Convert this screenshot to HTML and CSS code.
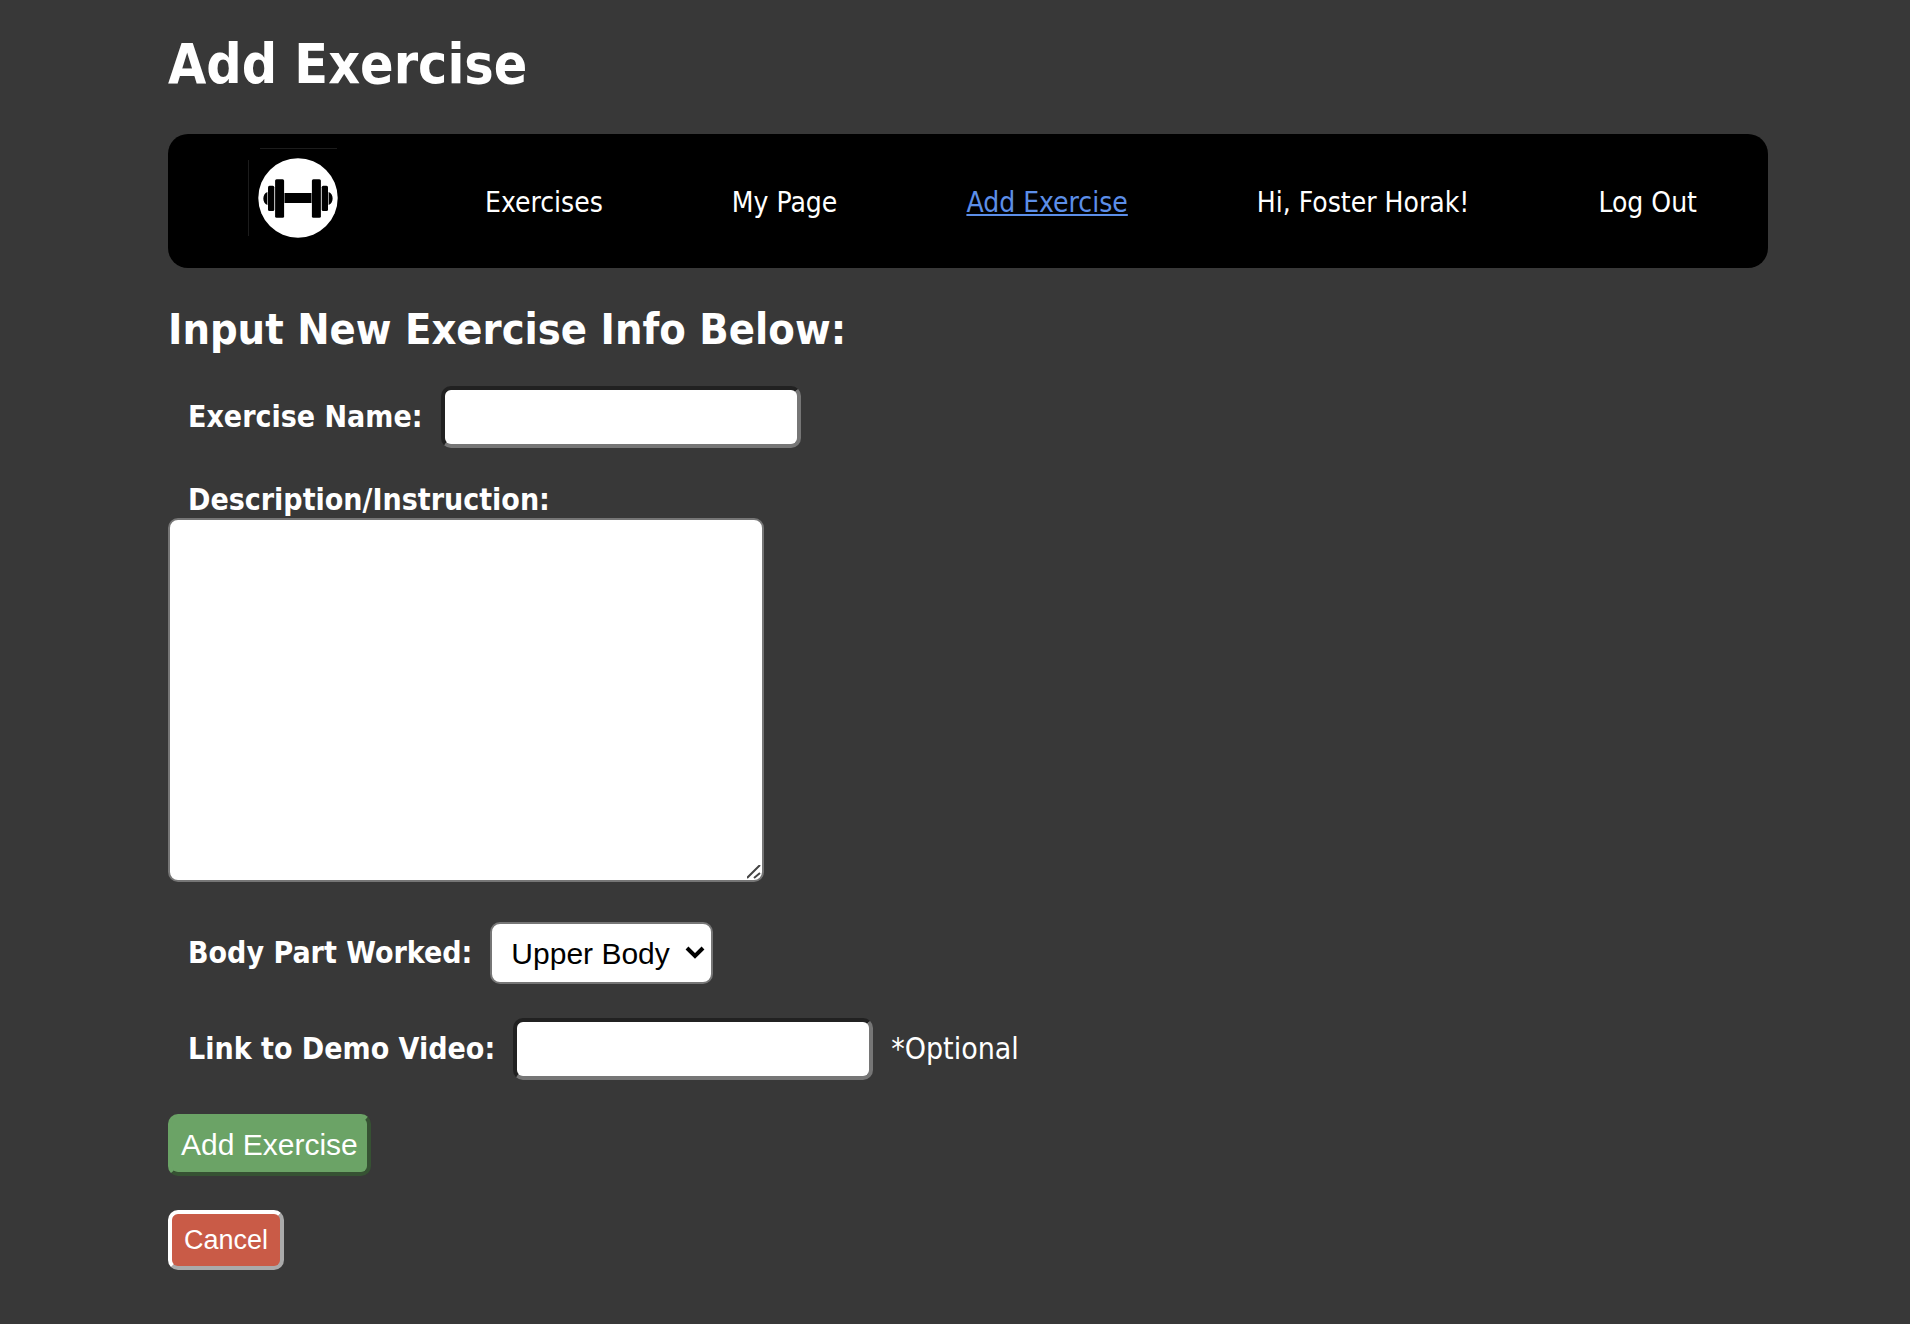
FILE: index.html
```html
<!DOCTYPE html>
<html lang="en">
<head>
<meta charset="utf-8">
<title>Add Exercise</title>
<link rel="stylesheet" href="styles.css">
</head>
<body>
<header>
  <h1 class="page-title">Add Exercise</h1>
  <nav class="navbar">
    <a class="logo" href="#" aria-label="Home">
      <svg width="108" height="100" viewBox="0 0 108 100" aria-hidden="true">
        <path d="M12 .5H89M.5 12V88" stroke="#1c1c1c" fill="none"/>
        <circle cx="50" cy="50" r="39.700" fill="#fff"/>
        <path d="M19.400 44C14 46 14 55 19.400 57ZM80.600 44C86 46 86 55 80.600 57Z"/>
        <rect x="20" y="37.700" width="6.300" height="25.300" rx="1.500"/>
        <rect x="73.700" y="37.700" width="6.300" height="25.300" rx="1.500"/>
        <rect x="27.100" y="31.300" width="9" height="38.400" rx="1.500"/>
        <rect x="63.900" y="31.300" width="9" height="38.400" rx="1.500"/>
        <rect x="36.500" y="45" width="27" height="10"/>
      </svg>
    </a>
    <a class="nav-link" href="#">Exercises</a>
    <a class="nav-link" href="#">My Page</a>
    <a class="nav-link active" href="#">Add Exercise</a>
    <span class="nav-link">Hi, Foster Horak!</span>
    <a class="nav-link" href="#">Log Out</a>
  </nav>
</header>
<main>
  <h2 class="form-title">Input New Exercise Info Below:</h2>
  <form class="form">
    <div class="row">
      <label for="name">Exercise Name:</label>
      <input class="field" id="name" type="text">
    </div>
    <div class="stack">
      <label for="description">Description/Instruction:</label>
      <textarea class="description" id="description"></textarea>
    </div>
    <div class="row">
      <label for="part">Body Part Worked:</label>
      <div class="select">
        <select id="part">
          <option>Upper Body</option>
          <option>Lower Body</option>
          <option>Core</option>
        </select>
        <svg class="arrow" width="20" height="14" viewBox="0 0 20 14" aria-hidden="true"><path d="M2 2L10 10L18 2" fill="none" stroke="#000" stroke-width="4"/></svg>
      </div>
    </div>
    <div class="row">
      <label for="video">Link to Demo Video:</label>
      <input class="field" id="video" type="text">
      <span class="note">*Optional</span>
    </div>
    <button class="button add" type="submit">Add Exercise</button>
    <button class="button cancel" type="button">Cancel</button>
  </form>
</main>
</body>
</html>
```
FILE: styles.css
```css
* {
  box-sizing: border-box;
}

body {
  margin: 0;
  padding: 28px 142px 52px 168px;
  background: #383838;
  color: #fff;
  font-family: Tahoma, "DejaVu Sans Condensed", "DejaVu Sans", sans-serif;
  font-size: 30px;
  line-height: 36px;
}

.page-title {
  margin: 0 0 34px;
  font-size: 55px;
  line-height: 72px;
}

.navbar {
  display: flex;
  justify-content: space-between;
  align-items: center;
  padding: 14px 71px 20px 80px;
  background: #000;
  border-radius: 20px;
}

.logo {
  display: flex;
}

.nav-link {
  padding-top: 10px;
  color: #fff;
  font-size: 28px;
  text-decoration: none;
  white-space: nowrap;
}

.nav-link.active {
  color: #5c8ee8;
  text-decoration: underline;
}

.form-title {
  margin: 36px 0 32px;
  font-size: 43px;
  line-height: 50px;
}

.form {
  display: flex;
  flex-direction: column;
  align-items: flex-start;
  gap: 34px;
}

.row {
  display: flex;
  align-items: center;
  gap: 18px;
}

.stack {
  display: flex;
  flex-direction: column;
  padding-bottom: 6px;
}

label {
  margin-left: 20px;
  font-weight: bold;
}

.field,
.description,
select,
.button {
  border-radius: 10px;
  font-family: Arial, "Liberation Sans", sans-serif;
  font-size: 30px;
}

.field {
  width: 360px;
  height: 62px;
  padding: 8px;
  background: #fff;
  border: 4px solid;
  border-color: #212121 #767676 #767676 #212121;
}

.description {
  width: 596px;
  height: 364px;
  padding: 8px;
  background: #fff;
  border: 2px solid #767676;
}

.description::-webkit-resizer {
  background: url("data:image/svg+xml,%3Csvg xmlns='http://www.w3.org/2000/svg' width='15' height='15'%3E%3Cpath d='M0 13L13 0M7 13L13 8' stroke='%23444' stroke-width='2'/%3E%3C/svg%3E") no-repeat;
}

.select {
  position: relative;
}

select {
  appearance: none;
  width: 223px;
  height: 62px;
  padding: 0 40px 0 19px;
  background: #fff;
  border: 2px solid #767676;
  color: #000;
}

.arrow {
  position: absolute;
  top: 24px;
  right: 8px;
  pointer-events: none;
}

.button {
  padding: 0 9px;
  border: 4px solid;
  color: #fff;
}

.add {
  height: 62px;
  background: #6ba366;
  border-color: #6ba366 #365233 #365233 #6ba366;
}

.cancel {
  height: 60px;
  padding: 0 12px;
  background: #c95b47;
  border-color: #fff #aaa #aaa #fff;
  font-size: 27px;
}
```
